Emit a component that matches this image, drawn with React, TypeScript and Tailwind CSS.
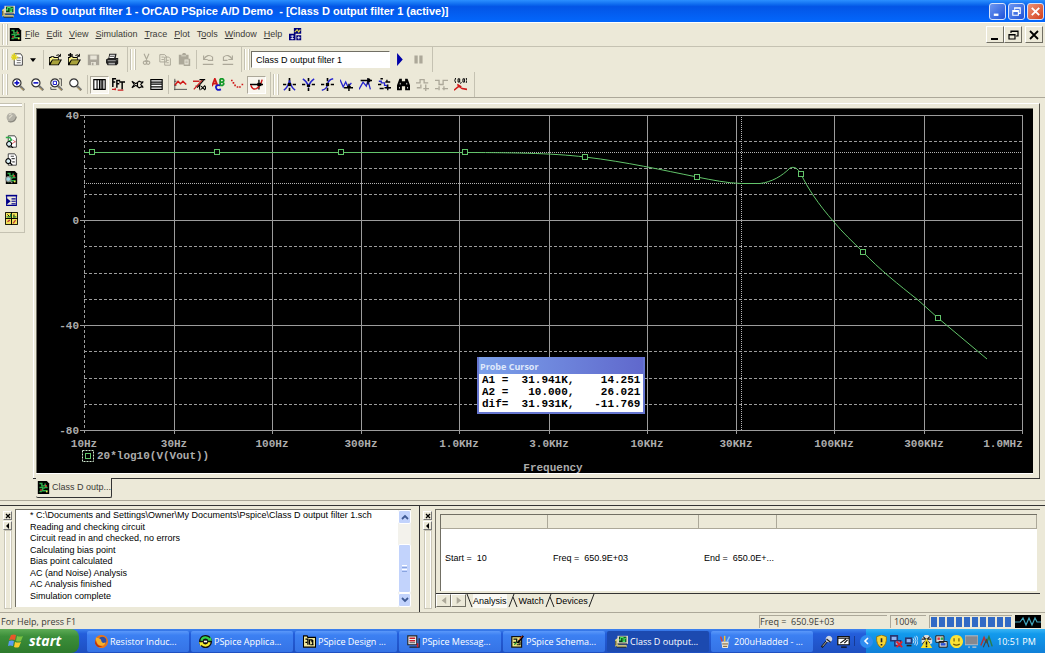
import type { ReactNode } from 'react';

type Part = { d: string; fill?: string; stroke?: string; w?: number };

const s = (stroke: string, d: string, w = 1.3): Part => ({ d, stroke, w });
const f = (fill: string, d: string): Part => ({ d, fill });

const lens = [s('#777', 'M10 10l5 5', 3), s('#c9a24a', 'M11 12l3 3', 1.2), f('#fff', 'M6 1a5 5 0 1 0 .01 0z'), s('#333', 'M6 1a5 5 0 1 0 .01 0z', 1.4)];
const cross = s('#000', 'M0 8h4M12 8h4M8 0v4M8 12v4', 2);
const page = [f('#fff', 'M4 1h8l2 3v11H4z'), s('#444', 'M4 1h8l2 3v11H4z', 1.2)];
const board = [f('#000', 'M1 0h11l3 3v13H1z'), s('#2fae4a', 'M3 3h3v3h4V3M3 8h4v4h6M10 8h3M3 13h3M8 9l4-2', 1.8), f('#e3423b', 'M10 5h2v2h-2zM4 10h2v2H4z'), f('#f0e04a', 'M11 12h2v2h-2z')];
const folder = [f('#000', 'M0 14V5h2V4h4l1 1h5v3h4l-4 7H0z'), f('#f4ee8a', 'M1 12V6h2V5h2l1 1h5v2H4z'), f('#a8a23a', 'M4.5 9H14l-3 5H2z'), s('#000', 'M9 3q3-2 5 1M14 1v3h-3', 1.2)];

const icons: Record<string, Part[]> = {
  board,
  app: [f('#e8dc86', 'M0 6l4-3v10l-4 1z'), f('#d8d4c8', 'M3 1h13v10H3z'), f('#063c12', 'M5 2h9v7H5z'), s('#49ea63', 'M5 6h2V3h3v5h2V4h2', 1.3), f('#c7c082', 'M3 12h11l1 3H2z'), s('#111', 'M3 11h12M2 15h12M1 7v6', 1)],
  windows: [f('#00007b', 'M6 0h9v7H6zM0 7h8v8H0zM9 9h6v6H9z'), s('#fff', 'M2 10h4M2 13h4M4 9v5M10 12h4M12 10v4', 1), s('#e8e04a', 'M7 5l3-3 2 3 2-3', 1.3)],
  new: [...page, s('#444', 'M7 6h5M7 9h5M7 12h5', 1), s('#e0d31b', 'M4 0v9M0 5h9M1 2l6 6M7 2L1 8', 1.5)],
  open: folder,
  append: [...folder, s('#000', 'M3 0v5M0 2.5h6', 1.7)],
  save: [f('#aaa69a', 'M1 2h14v13H1z'), f('#e8e5d8', 'M4 3h8v5H4zM5 11h6v4H5z'), f('#aaa69a', 'M6 12h2v3H6z')],
  print: [f('#222', 'M4 1h9l-1 5h3v7l-2 2H2l-2-3V8l3-2z'), f('#fff', 'M5 2h6l-1 4H4z'), f('#aaa', 'M2 9h10v1H2zM3 12h8v2H3z'), s('#111', 'M5 4h5', 1), f('#ece9d8', 'M13 8h1v1h-1z')],
  cut: [s('#aca899', 'M5 1l4 9M11 1L7 10M6 10a2 2 0 1 0 .1 0M10 10a2 2 0 1 0 .1 0', 1.4)],
  copy: [s('#aca899', 'M1 2h6l2 2v7H1zM7 5h5l2 2v8H7zM3 5h3M3 8h3M9 9h3M9 12h3', 1.2)],
  paste: [f('#aca899', 'M1 2h4l1-2h3l1 2h3v5h2v9H7v-2H1z'), f('#e8e5d8', 'M8 8h5v6H8zM4 3h6v1H4z'), s('#aca899', 'M9 10h3M9 12h3', 1)],
  undo: [s('#aca899', 'M2 3v5h5M2 8q5-8 11-3v4H7M1 14h13', 1.4)],
  redo: [s('#aca899', 'M14 3v5H9M14 8Q9 0 3 5v4h5M2 14h13', 1.4)],
  zoomIn: [...lens, s('#1414c8', 'M3 6h6M6 3v6', 2)],
  zoomOut: [...lens, s('#1414c8', 'M3 6h6', 2)],
  zoomArea: [...lens, s('#1414c8', 'M4 4h4v4H4z', 1.2), s('#333', 'M14 1v9M1 14h7M1 11v3M11 1h3', 1)],
  zoomFit: lens,
  logX: [f('#fff', 'M1 2h14v12H1z'), s('#000', 'M1 2h14v12H1zM5 2v12M8 2v12M10 2v12M12 2v12', 1.4)],
  fft: [s('#000', 'M1 11V1h4M1 5h3M6 12V3h4M6 7h3M9 5h7M12.5 5v9', 1.8), s('#c22', 'M0 14h5M4 12v3M7 15h7', 1.4)],
  performance: [s('#000', 'M1 4l5 3 4-3 5 2M1 12l5-3 4 3 5-2M1 4l3 4-3 4M8 6v4M15 4l-3 4 3 4', 1.4)],
  logY: [f('#fff', 'M1 2h14v12H1z'), s('#000', 'M1 2h14v12H1zM1 5h14M1 7.5h14M1 11h14', 1.4)],
  trace: [s('#555', 'M1 1v14M0 14h16M3 4H0M3 9H0', 1.2), s('#d01818', 'M1 9l4-5 3 3 3-3 4 4', 1.8)],
  evalFn: [s('#c22', 'M0 4h8M1 14L12 2M3 10h4', 1.7), s('#000', 'M8 2h7M13 3l-8 9M9 9q-2 3 0 6M14 9q3 3 0 6M10 10l4 4M14 10l-4 4', 1.3)],
  label: [s('#d01818', 'M0 10L3.5 1 7 10M2 7h4', 2.2), s('#139a28', 'M10 1v8M10 1h3q3 2 0 4h-3 3q3 2 0 4h-3', 2.2), s('#1818c8', 'M10 9q-6-1-5 3 1 4 6 2', 2.2)],
  points: [f('#d01818', 'M0 2h2v2H0zM2 5h2v2H2zM4 8h2v2H4zM7 10h2v2H7zM10 10h2v2h-2zM13 7h2v2h-2z')],
  cursor: [s('#000', 'M0 8h16M11 2v12', 1.6), s('#d01818', 'M1 9q2 6 7 4 5-3 7-11', 1.8), f('#000', 'M9 6h5v4H9z')],
  peak: [cross, s('#2424cc', 'M1 15q5-3 7-12 2 9 7 12', 1.8), f('#000', 'M6 6h4v4H6z')],
  trough: [cross, s('#2424cc', 'M1 1q5 3 7 9 2-6 7-9', 1.8), f('#000', 'M6 8h4v3H6z')],
  slope: [cross, s('#2424cc', 'M1 15q6-1 7-7t7-7', 1.8), f('#000', 'M6 6h4v4H6z')],
  min: [s('#2424cc', 'M0 2l4 9 3-6 3 6 4-5', 1.6), s('#000', 'M5 12h11M11 7v9M9 10l2 2 2-2', 1.7)],
  max: [s('#2424cc', 'M0 14L5 5l4 5 2-7 3 11', 1.6), s('#000', 'M2 3h14M11 0v8M12 1l2 2-2 2', 1.7)],
  point: [s('#2424cc', 'M1 4h3v2h4v3h3v3h4', 1.6), s('#000', 'M3 1h3M0 8h4M2 13h5M11 2v3M9 5h6M12 8v7M8 12h8', 1.7)],
  search: [f('#000', 'M3 1h3v3h4V1h3l3 8v6h-6v-5H6v5H0V9z'), s('#fff', 'M4 6v2M12 6v2M3 11v2M13 11v2', 1)],
  nextEdge: [s('#aca899', 'M0 6h5V2h5v4h5M1 12h4M9 13h7M12 8v8M6 8v5', 1.6)],
  prevEdge: [s('#aca899', 'M0 3h5v5h5V3h6M5 10v5M0 13h4M9 13h7M11 10v5', 1.6)],
  mark: [s('#000', 'M2 0q-2 3 0 6M5 1v4h2V1zM9 5l-1 2M11 1v4h2V1zM15 0q2 3 0 6', 1.2), s('#d01818', 'M0 15l6-5 4 3 6 1M9 11L4 8', 1.9)],
  play: [f('#0000a8', 'M5 0l7 8-7 8z')],
  pause: [f('#aca899', 'M3 3h4v10H3zM9 3h4v10H9z')],
  ball: [f('#b4b2a8', 'M8 2a6 6 0 1 0 .01 0z'), s('#dedbcd', 'M5 5l3-2M5 9l4-4', 1.4), s('#8a887e', 'M4 13q8 2 10-6', 1.4)],
  pageTrace: [...page, s('#2fae4a', 'M1 3h5l2 3-4 2', 2), s('#c44', 'M10 6l3 3M8 11l5-3', 1), f('#d7eef4', 'M5 8a3 3 0 1 0 .1 0z'), s('#000', 'M5 8a3 3 0 1 0 .1 0M7 13l3 3', 1.3)],
  pageView: [...page, s('#444', 'M7 4h4M8 7h4M9 11h3', 1.4), f('#d7eef4', 'M4 7a3 3 0 1 0 .1 0z'), s('#000', 'M4 7a3 3 0 1 0 .1 0M6 12l3 3', 1.4)],
  boardView: [...board, f('#9ed8e0', 'M4 7a3 3 0 1 0 .1 0z'), s('#888', 'M4 7a3 3 0 1 0 .1 0M6 12l3 3', 1.4)],
  outline: [f('#00008a', 'M1 1h14v2H1z'), s('#00008a', 'M2 2v12h12V2M8 6h5M8 9h5M8 12h5', 1.3), f('#00008a', 'M2 5l5 4-5 4z')],
  grid: [f('#f2e35a', 'M0 0h16v16H0z'), s('#000', 'M.5.5h15v15H.5zM8 0v16M0 8h16M3 3l3 3M11 3v4', 1.2), s('#228c35', 'M2 6h5V2M10 6h4', 1.6), s('#b33', 'M3 12l3-2M10 14l3-4', 1.5)],
  firefox: [f('#e8751a', 'M8 0a8 8 0 1 0 .01 0z'), f('#2c4ea8', 'M9 2a5 5 0 1 0 .01 0z'), f('#f6b02c', 'M1 3q2 1 4 1 3 1 3 4 1 3 5 1-1 5-6 4-6-1-6-10z'), f('#b8320e', 'M1 6q1 8 8 8-6 3-9-4z')],
  sync: [f('#111', 'M8 0a8 8 0 1 0 .01 0z'), s('#35d14b', 'M3 7q1-4 5-4 3 0 5 3', 2.8), s('#f5ec35', 'M13 9q-1 4-5 4-3 0-5-3', 2.8), f('#fff', 'M6 7h4v2H6z'), f('#35d14b', 'M11 7h5l-2-5z'), f('#f5ec35', 'M0 9h5l-3 5z')],
  design: [f('#f1e79a', 'M0 1h5l1 2h10v12H0z'), s('#000', 'M.5 1v14h15V3H6L5 1zM3 5h3v7M8 12V6h3v3M12 6v6M3 9h2M9 12h4', 1.5)],
  message: [f('#eee', 'M1 1h11v11H1z'), s('#222', 'M1 1h11v11H1zM3 15h12V4', 1.4), s('#c81e2c', 'M3 4h7M3 7h7M13 10v5', 2), s('#333', 'M3 9.5h7', 1)],
  schema: [f('#f1ea83', 'M1 2h12v13H1z'), s('#111', 'M1 2h12v13H1zM3 5h4v4H3M7 12h4V8', 1.5), s('#168b2a', 'M4 12l3-3', 1.6), s('#000', 'M8 10l7-9', 2.4), s('#e0432b', 'M10 6l4-5', 1.2)],
  jar: [f('#e9e4d5', 'M3 8h9l-1 8H4z'), s('#d9413a', 'M4 8L2 2', 1.8), s('#f2c230', 'M7 8V1', 1.8), s('#8cc5f5', 'M10 8l3-6', 1.8), s('#7c5a2c', 'M4 11h7M5 14h5', 1.2)],
  mic: [s('#111', 'M2 15l7-8', 2.6), s('#ddd', 'M3 14l6-7', 1), f('#cfd6e4', 'M11 1a4 4 0 1 0 .1 0z'), s('#222', 'M8 5l5 4', 1.4)],
  pen: [f('#fff', 'M1 2h14v10H1z'), s('#111', 'M1 2h14v10H1zM1 4h14M5 15h7M4 10l7-5M9 10l4-4', 1.5)],
  shield: [f('#f7d433', 'M8 0l6 2q1 10-6 14Q1 12 2 2z'), s('#8a6a08', 'M8 0l6 2q1 10-6 14Q1 12 2 2z', 1), s('#222', 'M8 4v5M8 11v2', 2)],
  netOff: [f('#27356f', 'M0 0h10v8H0zM5 6h9v8H5z'), f('#8fb5f2', 'M2 2h6v4H2zM7 8h5v4H7z'), s('#e0252c', 'M8 8l7 7M15 8l-7 7', 2.2)],
  wifi: [f('#27356f', 'M0 3h9v8H0z'), f('#8fb5f2', 'M2 5h5v4H2z'), s('#eef', 'M10 4q2 3 0 6M12 2q3 5 0 10M14 1q4 6 0 12', 1), f('#222', 'M2 12h6v2H2z')],
  warn: [f('#ddd', 'M6 0h4l5 5v5l-6 3-7-3V4z'), s('#222', 'M2 5h12M4 2l8 8M12 2L3 11', 1.4), f('#f7e02b', 'M8 4l7 12H1z'), s('#111', 'M8 8v4M8 13v2', 1.8)],
  displays: [f('#ddd', 'M1 1h10v8H1zM5 7h10v8H5z'), s('#1a1a1a', 'M1 1h10v8H1zM5 8h10v7H5z', 1.2), f('#d8323a', 'M3 3h3v3H3z'), f('#2aa84a', 'M7 3h3v3H7z'), f('#2a52d8', 'M7 10h6v3H7z')],
  smile: [f('#fce236', 'M8 0a8 8 0 1 0 .01 0z'), s('#6f5700', 'M5 4v4M11 4v4M4 11q4 3 8 0', 1.4)],
  monitor: [f('#85888f', 'M0 1h16v11H0z'), s('#b9bcc4', 'M0 1h16v11H0z', 1.2), s('#c4c6cc', 'M4 15h2M9 15h5', 1.6)],
  wave: [s('#b3333a', 'M1 13L5 3l3 7', 1.8), s('#2a7e4a', 'M8 10l3-8 4 12', 1.8), s('#444', 'M4 15l4-9 3 9', 1.4)],
};

function Icon({ name }: { name: string }) {
  return (
    <svg viewBox="0 0 16 16" className="h-[13px] w-[13px] shrink-0" aria-hidden="true">
      {icons[name].map((p, i) => (
        <path key={i} d={p.d} fill={p.fill ?? 'none'} stroke={p.stroke ?? 'none'} strokeWidth={p.w} />
      ))}
    </svg>
  );
}

function Tool({ name, pressed }: { name: string; pressed?: boolean }) {
  return (
    <button
      aria-label={name}
      className={`flex h-[18px] w-[19px] items-center justify-center border ${pressed ? 'border-[#aca899] border-r-white border-b-white bg-[#f8f6ee]' : 'border-transparent'}`}
    >
      <Icon name={name} />
    </button>
  );
}

const Grip = () => <span className="mr-px flex h-[21px] w-[6px] shrink-0 justify-between border-x border-[#c5c2b2]"><span className="w-px bg-white" /><span className="w-px bg-white" /></span>;
const Sep = () => <span className="mx-[2px] h-[19px] w-px shrink-0 bg-[#c5c2b2]" />;

function Bar({ children }: { children: ReactNode }) {
  return <div className="flex h-full items-center border-r border-[#c5c2b2] pr-1 pl-[2px]">{children}</div>;
}

const menus = [['', 'F', 'ile'], ['', 'E', 'dit'], ['', 'V', 'iew'], ['', 'S', 'imulation'], ['', 'T', 'race'], ['', 'P', 'lot'], ['T', 'o', 'ols'], ['', 'W', 'indow'], ['', 'H', 'elp']];

// plot scales: 187.6px per decade, 2.625px per dB
const px = (hz: number) => Math.round(47 + Math.log10(hz / 10) * 187.6);
const py = (db: number) => Math.round(111 - db * 2.625);

const ticks: [number, string][] = [
  [10, '10Hz'], [30, '30Hz'], [100, '100Hz'], [300, '300Hz'], [1e3, '1.0KHz'], [3e3, '3.0KHz'],
  [1e4, '10KHz'], [3e4, '30KHz'], [1e5, '100KHz'], [3e5, '300KHz'], [1e6, '1.0MHz'],
];
const minor = [30, 20, 10, -10, -20, -30, -50, -60, -70];
const markers = [[55, 43], [180, 43], [304, 43], [428, 43], [548, 48], [660, 68], [764, 65], [826, 143], [901, 209]];

function Plot() {
  return (
    <svg viewBox="0 0 996 364" className="block h-auto w-full bg-black font-['Liberation_Mono',monospace] text-[11px] font-bold" role="img" aria-label="20*log10(V(Vout)) against frequency">
      <g stroke="#9c9c9c" shapeRendering="crispEdges">
        {ticks.map(([hz]) => (
          <path key={hz} d={`M${px(hz) + 0.5} 6V325`} strokeDasharray={hz === 10 ? '3 2' : undefined} />
        ))}
        {[40, 0, -40, -80].map((db) => <path key={db} d={`M43 ${py(db) + 0.5}H985`} />)}
        {minor.map((db) => <path key={db} d={`M47 ${py(db) + 0.5}H985`} strokeDasharray="3 2" />)}
        <path d="M47 43.5H985M47 74.5H985M704.5 6V321" stroke="#b4b4b4" strokeDasharray="1 1" />
      </g>
      <g fill="none" stroke="#62c46a">
        <path d="M47 43.5H422C470 43.5 515 44 548 48C590 53 625 61 660 68C675 71 690 74 704 74.5H723C735 73 745 67 753 59Q759 56 764 65C770 78 781 95 797 113C806 124 815 132 826 143C842 160 862 176 881 191L901 209L950 250" />
        {markers.map(([x, y]) => <rect key={x} x={x - 2.5} y={y - 2.5} width="5" height="5" fill="#000" shapeRendering="crispEdges" />)}
        <rect x="48.5" y="344.5" width="5" height="5" />
        <rect x="45.5" y="341.5" width="11" height="11" stroke="#d0e8d0" strokeDasharray="2 1" />
      </g>
      <g fill="#acacac">
        {[40, 0, -40, -80].map((db) => <text key={db} x="42" y={py(db) + 4} textAnchor="end">{db}</text>)}
        {ticks.map(([hz, label]) => <text key={hz} x={hz === 1e6 ? 966 : px(hz)} y="338" textAnchor="middle">{label}</text>)}
        <text x="60" y="350">20*log10(V(Vout))</text>
        <text x="516" y="362" textAnchor="middle">Frequency</text>
      </g>
    </svg>
  );
}

const cursorRows = ['A1 =  31.941K,    14.251', 'A2 =   10.000,    26.021', 'dif=  31.931K,   -11.769'];

function ProbeCursor() {
  return (
    <div className="absolute top-[248px] left-[440px] border-2 border-t-0 border-[#6575cf] bg-white">
      <div className="h-[17px] bg-linear-to-r from-[#7ba0ea] to-[#6068cc] px-px pt-[3px] font-['Open_Sans',sans-serif] text-[9px] leading-[13px] font-bold text-[#dfe8fb]">Probe Cursor</div>
      <pre className="h-[38px] px-[3px] font-['Liberation_Mono',monospace] text-[11px] leading-[12px] font-bold text-black">{cursorRows.join('\n')}</pre>
    </div>
  );
}

const log = [
  '* C:\\Documents and Settings\\Owner\\My Documents\\Pspice\\Class D output filter 1.sch',
  'Reading and checking circuit', 'Circuit read in and checked, no errors', 'Calculating bias point',
  'Bias point calculated', 'AC (and Noise) Analysis', 'AC Analysis finished', 'Simulation complete',
];

function PaneGrip() {
  return (
    <div className="flex w-[15px] shrink-0 flex-col items-center gap-px pt-[5px]">
      <button aria-label="Close pane" className="flex h-[9px] w-[9px] items-center justify-center border border-white border-r-[#777] border-b-[#777]">
        <svg viewBox="0 0 6 6" className="h-[6px] w-[6px]"><path d="M1 1l4 4M5 1L1 5" stroke="#000" strokeWidth="1.3" /></svg>
      </button>
      <button aria-label="Collapse pane" className="flex h-[9px] w-[9px] items-center justify-center border border-white border-r-[#777] border-b-[#777]">
        <svg viewBox="0 0 6 6" className="h-[6px] w-[6px]"><path d="M4 0v6L1 3z" /></svg>
      </button>
      <span className="mb-[4px] w-[6px] flex-1 border-x border-white outline outline-[#c9c6b7]" />
    </div>
  );
}

function ScrollButton({ down }: { down?: boolean }) {
  return (
    <button aria-label={down ? 'Scroll down' : 'Scroll up'} className="flex h-[14px] items-center justify-center rounded-xs border border-white bg-[#c2d3fc]">
      <svg viewBox="0 0 8 6" className="h-[6px] w-[8px]"><path d={down ? 'M1 1l3 3 3-3' : 'M1 5l3-3 3 3'} fill="none" stroke="#3f5a94" strokeWidth="1.8" /></svg>
    </button>
  );
}

const tasks: [string, string][] = [
  ['firefox', 'Resistor Induc...'], ['sync', 'PSpice Applica...'], ['design', 'PSpice Design ...'], ['message', 'PSpice Messag...'],
  ['schema', 'PSpice Schema...'], ['app', 'Class D output...'], ['jar', '200uHadded - ...'],
];
const tray = ['shield', 'netOff', 'wifi', 'warn', 'displays', 'smile', 'monitor', 'wave'];

const capButton = 'flex h-[17px] w-[17px] items-center justify-center rounded-[3px] border border-[#d5e2fa]';
const mdiButton = 'flex h-[17px] w-[18px] items-center justify-center border border-white border-r-[#716f64] border-b-[#716f64]';

export default function App() {
  return (
    <div className="flex min-h-screen flex-col bg-[#ece9d8] font-['Liberation_Sans',Arial,sans-serif] text-[9px] leading-[11px] text-black">
      <header className="flex h-[22px] items-center bg-linear-to-b from-[#2b90ff] via-[#0355e6] via-30% to-[#0367fc] pr-px pl-[2px] text-white">
        <Icon name="app" />
        <h1 className="ml-[3px] flex-1 font-['Liberation_Sans',sans-serif] text-[11px] leading-[14px] font-bold whitespace-pre">Class D output filter 1 - OrCAD PSpice A/D Demo  - [Class D output filter 1 (active)]</h1>
        <div className="flex gap-[2px]">
          <button aria-label="Minimize" className={`${capButton} bg-linear-to-br from-[#6f97f0] to-[#1d4fd8]`}><svg viewBox="0 0 14 14" className="h-[13px] w-[13px]"><path d="M3 10.5h5" stroke="#fff" strokeWidth="2.5" /></svg></button>
          <button aria-label="Restore" className={`${capButton} bg-linear-to-br from-[#6f97f0] to-[#1d4fd8]`}><svg viewBox="0 0 14 14" className="h-[13px] w-[13px]"><path d="M5 5V3h6v6H9M3 6h6v5H3zM3 7h6M5 3.5h6" fill="none" stroke="#fff" strokeWidth="1.2" /></svg></button>
          <button aria-label="Close" className={`${capButton} bg-linear-to-br from-[#f09274] to-[#d03c14]`}><svg viewBox="0 0 14 14" className="h-[13px] w-[13px]"><path d="M3 3l8 8M11 3l-8 8" stroke="#fff" strokeWidth="2" /></svg></button>
        </div>
      </header>

      <nav className="flex h-[25px] items-center border-t border-b border-t-white border-b-[#c5c2b2] pr-[2px] pl-[2px]">
        <Grip />
        <Icon name="board" />
        <div className="ml-[3px] flex flex-1 items-center gap-[7px] text-[#3c3b37]">
          {menus.map(([pre, key, rest]) => <button key={key + rest}>{pre}<u>{key}</u>{rest}</button>)}
          <Icon name="windows" />
        </div>
        <button aria-label="Minimize document" className={mdiButton}><svg viewBox="0 0 12 12" className="h-[12px] w-[12px]"><path d="M2 10h7" stroke="#000" strokeWidth="2" /></svg></button>
        <button aria-label="Restore document" className={mdiButton}><svg viewBox="0 0 12 12" className="h-[12px] w-[12px]"><path d="M4 4V2h7v5H9M2 5.5h6V10H2zM4 2.5h7M2 6h6" fill="none" stroke="#000" strokeWidth="1.2" /></svg></button>
        <button aria-label="Close document" className={`${mdiButton} ml-[3px]`}><svg viewBox="0 0 12 12" className="h-[12px] w-[12px]"><path d="M2 2l8 8M10 2l-8 8" stroke="#000" strokeWidth="1.8" /></svg></button>
      </nav>

      <div className="flex h-[25px]">
        <Bar>
          <Grip />
          <span className="w-[2px]" />
          <Icon name="new" />
          <button aria-label="New file options" className="flex w-[17px] justify-center"><svg viewBox="0 0 8 5" className="h-[4px] w-[6px]"><path d="M0 0h8L4 5z" /></svg></button>
          <Sep />
          <Tool name="open" /><Tool name="append" /><Tool name="save" /><Tool name="print" />
          <span className="w-px" />
        </Bar>
        <Bar>
          <Grip />
          <Tool name="cut" /><Tool name="copy" /><Tool name="paste" />
          <Sep />
          <Tool name="undo" /><Tool name="redo" />
        </Bar>
        <Bar>
          <Grip />
          <input aria-label="Simulation profile" defaultValue="Class D output filter 1" className="h-[17px] w-[139px] border border-[#716f64] border-r-white border-b-white bg-white px-1" />
          <Tool name="play" /><Tool name="pause" />
        </Bar>
        <span className="flex-1" />
      </div>

      <div className="flex h-[26px] border-b border-[#aca899]">
        <Bar>
          <Grip />
          <Tool name="zoomIn" /><Tool name="zoomOut" /><Tool name="zoomArea" /><Tool name="zoomFit" />
          <Sep />
          <Tool name="logX" pressed /><Tool name="fft" /><Tool name="performance" /><Tool name="logY" />
          <Sep />
          <Tool name="trace" /><Tool name="evalFn" /><Tool name="label" /><Tool name="points" /><Tool name="cursor" pressed />
        </Bar>
        <Bar>
          <Grip />
          {['peak', 'trough', 'slope', 'min', 'max', 'point', 'search', 'nextEdge', 'prevEdge', 'mark'].map((n) => <Tool key={n} name={n} />)}
        </Bar>
      </div>

      <main className="flex pt-[5px]">
        <aside className="mr-[8px] flex w-[25px] shrink-0 flex-col items-center self-start border-r border-b border-[#c5c2b2] pr-[2px] pb-[5px]">
          <span className="mb-px h-[4px] w-[22px] border-y border-[#c5c2b2] bg-white" />
          <Tool name="ball" />
          <span className="h-[6px]" />
          <Tool name="pageTrace" /><Tool name="pageView" /><Tool name="boardView" />
          <span className="h-[5px]" />
          <Tool name="outline" /><Tool name="grid" />
        </aside>
        <section className="min-w-0 flex-1">
          <div className="mr-[5px] border-t border-r border-l border-white border-r-[#55534a] pt-[4px] pr-[6px] pl-[2px]">
            <div className="relative border-t border-l border-[#716f64]">
              <Plot />
              <ProbeCursor />
            </div>
            <div className="h-[5px] border-t border-white" />
          </div>
          <div className="flex h-[22px]">
            <span className="w-[3px] border-t border-[#333]" />
            <button className="flex h-[20px] items-center gap-[2px] rounded-b-xs border-r border-b border-[#333] pl-px text-[#3c3b37]"><Icon name="board" />Class D outp...</button>
            <span className="mr-[5px] flex-1 border-t border-[#333]" />
          </div>
        </section>
      </main>

      <div className="h-[6px] border-t border-b border-t-[#aca899] border-b-[#333]" />
      <div className="grid flex-1 grid-cols-[420fr_625fr]">
        <section aria-label="Output" className="flex border-r border-[#333]">
          <PaneGrip />
          <div className="mt-[3px] mr-[8px] mb-[5px] flex min-w-0 flex-1 border-t border-l border-[#716f64] bg-white">
            <div className="flex h-[92px] min-w-0 flex-1 flex-col pl-[14px] whitespace-nowrap">
              {log.map((line) => <p key={line} className="flex-1">{line}</p>)}
            </div>
            <div className="flex w-[13px] flex-col bg-[#f3f2ec]">
              <ScrollButton />
              <span className="flex-[20]" />
              <span className="flex flex-[48] flex-col items-center justify-center gap-px rounded-xs border border-white bg-[#c2d3fc]">
                <i className="h-px w-[5px] bg-white" /><i className="h-px w-[5px] bg-[#8aa5e0]" /><i className="h-px w-[5px] bg-white" /><i className="h-px w-[5px] bg-[#8aa5e0]" />
              </span>
              <ScrollButton down />
            </div>
          </div>
        </section>

        <section aria-label="Simulation status" className="flex">
          <PaneGrip />
          <div className="mt-[3px] mr-[5px] mb-[4px] flex min-w-0 flex-1 flex-col border-t border-l border-[#716f64]">
            <div className="mt-[4px] mr-[3px] mb-[2px] ml-[4px] flex-1 border-t border-l border-[#716f64] bg-white">
              <table className="w-full table-fixed text-left">
                <colgroup><col className="w-[106px]" /><col className="w-[151px]" /><col className="w-[78px]" /><col /></colgroup>
                <thead>
                  <tr className="h-[13px] bg-[#ece9d8]">
                    {['Start', 'Freq', 'End', 'Rest'].map((h) => <th key={h} aria-label={h} className="border-r border-b border-[#aca899]" />)}
                  </tr>
                </thead>
                <tbody>
                  <tr className="h-[60px] whitespace-pre">
                    <td className="pl-[4px]">Start =  10</td>
                    <td className="pl-[6px]">Freq =  650.9E+03</td>
                    <td className="pl-[6px]">End =  650.0E+...</td>
                    <td />
                  </tr>
                </tbody>
              </table>
            </div>
            <div className="flex h-[15px] shrink-0 border-t border-[#333]">
              {['M8 1v8L3 5z', 'M3 1v8l5-4z'].map((d, i) => (
                <button key={d} aria-label={i ? 'Next tab' : 'Previous tab'} className="flex h-[13px] w-[15px] items-center justify-center border border-white border-r-[#716f64] border-b-[#716f64]"><svg viewBox="0 0 10 10" className="h-[9px] w-[9px]"><path d={d} fill="#aca899" /></svg></button>
              ))}
              <svg viewBox="0 0 7 14" className="h-[14px] w-[7px]"><path d="M1 0l5 13" stroke="#222" /></svg>
              <button className="bg-[#faf9f4]">Analysis</button>
              {['Watch', 'Devices'].map((t) => (
                <span key={t} className="flex">
                  <svg viewBox="0 0 12 14" className="h-[14px] w-[12px]"><path d="M2 13L7 0M6 3l4 10" fill="none" stroke="#222" /></svg>
                  <button>{t}</button>
                </span>
              ))}
              <svg viewBox="0 0 7 14" className="h-[14px] w-[7px]"><path d="M1 13L6 0" stroke="#222" /></svg>
            </div>
          </div>
        </section>
      </div>

      <footer className="flex h-[17px] items-center border-t border-[#aca899] font-['Open_Sans',sans-serif] text-[9px] text-[#3c3b37]">
        <span className="flex-1 pl-px">For Help, press F1</span>
        <span className="h-[13px] w-[128px] border-t border-l border-[#aca899] whitespace-pre">Freq =  650.9E+03</span>
        <span className="ml-[3px] h-[13px] w-[36px] border-t border-l border-[#aca899] pl-[3px]">100%</span>
        <span role="progressbar" aria-label="Simulation progress" aria-valuenow={100} className="mx-[3px] flex h-[13px] w-[83px] gap-[2px] border-t border-l border-[#aca899] p-px">
          {Array.from({ length: 10 }, (_, i) => <i key={i} className="flex-1 bg-[#316ac5]" />)}
        </span>
        <svg viewBox="0 0 26 13" className="mr-[4px] h-[13px] w-[26px] bg-black"><path d="M0 7h5l3-4 3 7 3-7 3 7 3-7 2 4h4" fill="none" stroke="#42a6bd" strokeWidth="1.2" /></svg>
      </footer>

      <div className="flex h-[24px] shrink-0 bg-linear-to-b from-[#3f83ee] via-[#245edb] via-20% to-[#1e4fc0] font-['Open_Sans',sans-serif] text-white">
        <button className="mr-[8px] flex w-[79px] items-center gap-[5px] rounded-r-lg bg-linear-to-b from-[#5eac56] via-[#3c8f3a] via-30% to-[#2d7a2c] pl-[8px] text-[14px] leading-[18px] font-bold italic">
          <svg viewBox="0 0 16 16" className="h-[16px] w-[16px]">
            <path d="M3 2q3-1 5 0L7 7q-3-1-6 0z" fill="#e8562a" /><path d="M9 3q3 1 6 0l-2 5q-2 1-5 0z" fill="#7cc242" />
            <path d="M1 8q3-1 5 0l-1 5q-3-1-5 0z" fill="#5b9bf0" /><path d="M7 9q3 1 6 0l-2 5q-2 1-5 0z" fill="#f8cc2c" />
          </svg>
          start
        </button>
        <div className="flex min-w-0 flex-1 gap-[2px] pt-[2px] pb-px">
          {tasks.map(([icon, label]) => (
            <button key={label} className={`flex min-w-0 flex-1 items-center gap-[2px] rounded-xs pl-[8px] whitespace-nowrap ${icon === 'app' ? 'bg-[#1c4ab0]' : 'bg-linear-to-b from-[#5a98fa] via-[#3c80f2] via-20% to-[#3573e6]'}`}>
              <Icon name={icon} />{label}
            </button>
          ))}
        </div>
        <div className="flex w-[53px] items-center gap-[4px] pl-[7px]"><Icon name="mic" /><Icon name="pen" /><span className="h-[10px] w-px bg-[#173a94]" /></div>
        <div className="flex w-[179px] items-center gap-[2px] bg-linear-to-b from-[#36b5f5] via-[#129aec] via-20% to-[#1080d8]">
          <button aria-label="Show hidden icons" className="-ml-[6px] flex h-[13px] w-[13px] items-center justify-center rounded-full bg-[#2f8df0]"><svg viewBox="0 0 8 8" className="h-[8px] w-[8px]"><path d="M5 1L2 4l3 3" fill="none" stroke="#fff" strokeWidth="1.6" /></svg></button>
          {tray.map((n) => <Icon key={n} name={n} />)}
          <time className="ml-[2px] whitespace-nowrap">10:51 PM</time>
        </div>
      </div>
    </div>
  );
}
